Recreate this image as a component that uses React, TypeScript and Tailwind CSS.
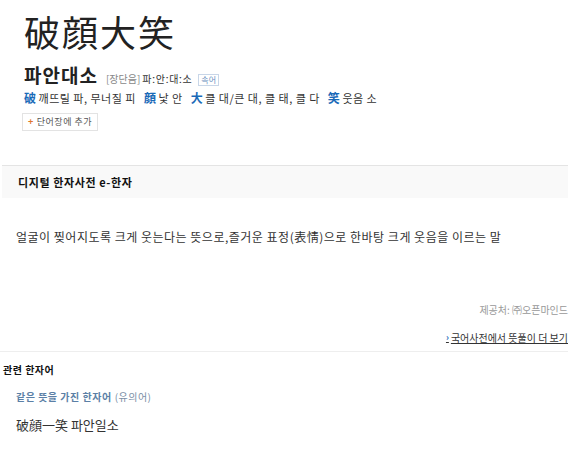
import React from "react";

const font = { fontFamily: '"Noto Sans CJK KR", "Noto Sans", sans-serif' };

export default function App() {
  const hanja = "text-[#1a6ab8] font-bold";
  return (
    <div className="w-[580px] h-[453px] bg-white text-[#333] overflow-hidden" style={font}>
      <div className="pl-[24px] pt-[8px]">
        <div className="text-[36px] leading-[46px] text-[#222] tracking-[2px]">破顔大笑</div>
        <div className="flex items-baseline mt-[10px]">
          <span className="text-[19px] leading-[22px] font-bold text-[#222] tracking-[1px]">파안대소</span>
          <span className="ml-[8px] text-[10px] text-[#888]">[장단음]</span>
          <span className="ml-[2px] text-[10px] text-[#333] tracking-[0.5px]">파ː안ː대ː소</span>
          <span className="ml-[6px] text-[8px] leading-[10px] text-[#6a8fc0] border border-[#c8d6e8] px-[2px]">속어</span>
        </div>
        <div className="flex items-center text-[11px] leading-[16px] mt-[4px] text-[#333] tracking-[0.5px]">
          <span className={hanja + " text-[12px]"}>破</span>
          <span className="ml-[2px]">깨뜨릴 파, 무너질 피</span>
          <span className={hanja + " text-[12px] ml-[8px]"}>顔</span>
          <span className="ml-[2px]">낯 안</span>
          <span className={hanja + " text-[12px] ml-[8px]"}>大</span>
          <span className="ml-[2px]">클 대/큰 대, 클 태, 클 다</span>
          <span className={hanja + " text-[12px] ml-[8px]"}>笑</span>
          <span className="ml-[2px]">웃음 소</span>
        </div>
        <div className="mt-[7px] -ml-[2px] inline-flex items-center h-[18px] px-[5px] border border-[#e3e3e3] text-[9px] text-[#555] tracking-[0.5px]">
          <span className="text-[#e0772b] mr-[3px] font-bold">+</span>단어장에 추가
        </div>
      </div>

      <div className="mt-[34px] ml-[2px] w-[566px] border-t border-[#e4e4e4] bg-[#f9f9f9] h-[33px] flex items-center pl-[16px]">
        <span className="text-[11px] font-bold text-[#111] tracking-[0.6px]">디지털 한자사전 e-한자</span>
      </div>

      <div className="pl-[16px] mt-[30px] text-[12px] leading-[18px] text-[#333] tracking-[0.5px]">
        얼굴이 찢어지도록 크게 웃는다는 뜻으로,즐거운 표정(表情)으로 한바탕 크게 웃음을 이르는 말
      </div>

      <div className="w-[568px] flex flex-col items-end mt-[57px]">
        <div className="text-[10px] leading-[14px] text-[#999]">제공처: ㈜오픈마인드</div>
        <div className="mt-[14px] text-[10px] leading-[14px] text-[#333] underline flex items-center">
          <span className="text-[#1a6ab8] no-underline mr-[2px] text-[9px] font-bold">›</span>
          <span>국어사전에서 뜻풀이 더 보기</span>
        </div>
      </div>

      <div className="mt-[6px] w-[568px] border-t border-[#eeeeee]"></div>

      <div className="pl-[3px] mt-[11px] text-[10px] leading-[14px] font-bold text-[#111] tracking-[0.5px]">관련 한자어</div>
      <div className="pl-[16px] mt-[13px] text-[10px] leading-[14px] tracking-[0.5px]">
        <span className="font-bold text-[#5b7fa6]">같은 뜻을 가진 한자어</span>
        <span className="text-[#7b8fa6] ml-[3px]">(유의어)</span>
      </div>
      <div className="pl-[16px] mt-[12px] text-[13px] leading-[18px] text-[#333]">破顔一笑 파안일소</div>
    </div>
  );
}
